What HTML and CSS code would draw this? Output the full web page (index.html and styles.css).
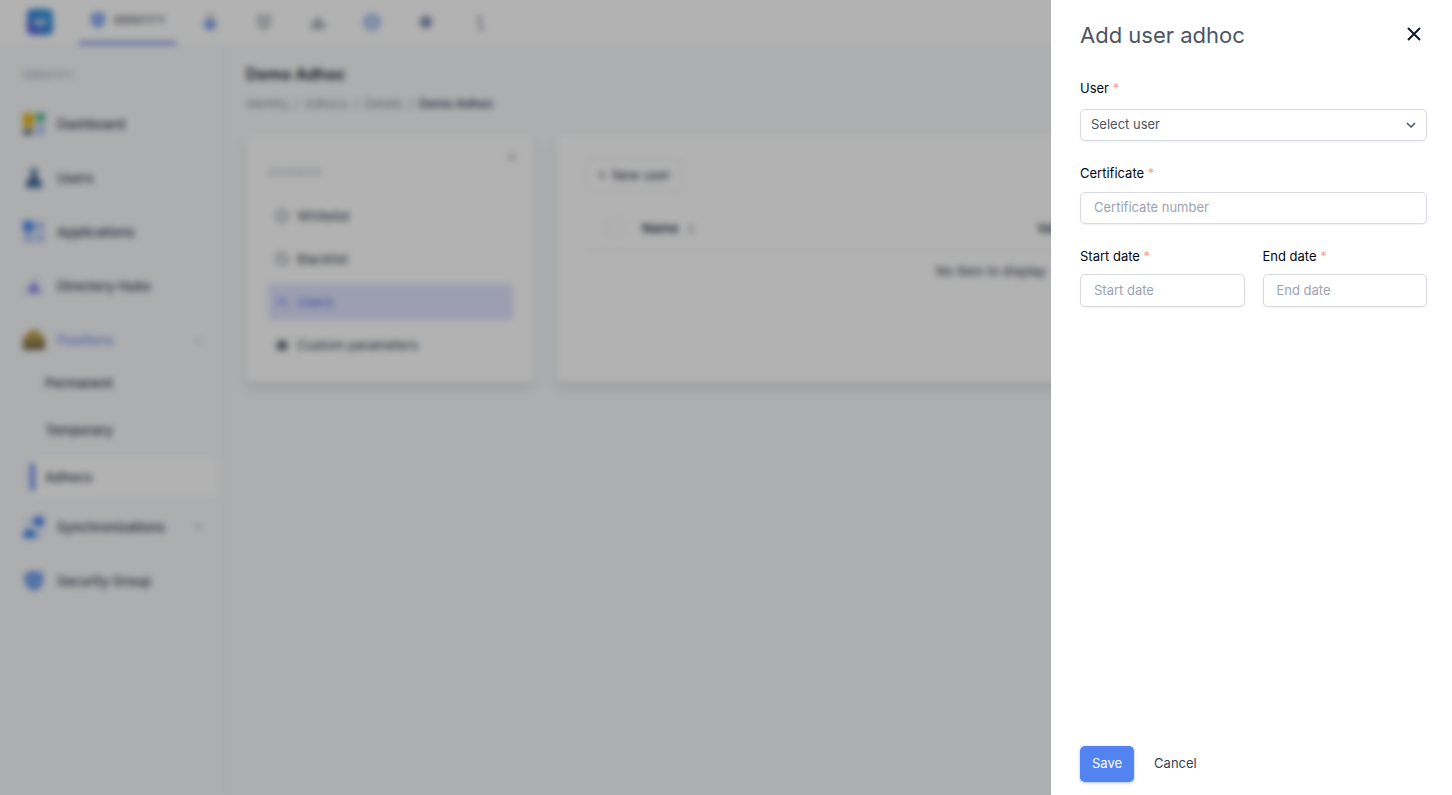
FILE: index.html
```html
<!DOCTYPE html>
<html lang="en">
<head>
  <meta charset="UTF-8" />
  <meta name="viewport" content="width=device-width, initial-scale=1.0">
  <title>Demo Adhoc</title>
  <link rel="stylesheet" href="styles.css">
</head>
<body>

  <!-- TOP BAR -->
  <header class="topbar">
    <a class="logo" href="#" aria-label="Home">
      <svg width="26" height="26" viewBox="0 0 26 26">
        <defs>
          <linearGradient id="logoFill" x1="0" y1="1" x2="1" y2="0">
            <stop offset="0" stop-color="#6a5bd8" />
            <stop offset="0.5" stop-color="#3585da" />
            <stop offset="1" stop-color="#3a9fe4" />
          </linearGradient>
        </defs>
        <rect width="26" height="26" rx="5" fill="url(#logoFill)" />
        <path d="M7 10l3 6 3-5 3 5 3-6" fill="none" stroke="#fff" stroke-width="2" />
      </svg>
    </a>
    <nav class="tabs">
      <a class="tab active" href="#">
        <svg width="16" height="18" viewBox="0 0 16 18"><path d="M8 1l7 2v6c0 4-3 6.500-7 8-4-1.500-7-4-7-8V3z" fill="#7fa3f0" /><circle cx="8" cy="8" r="3" fill="#a9c4ff" /></svg>
        IDENTITY
      </a>
      <a class="tab" href="#" aria-label="Access"><svg width="16" height="18" viewBox="0 0 16 18"><path d="M5 8V5a3 3 0 0 1 6 0v3" fill="none" stroke="#a6abb6" stroke-width="2" /><path d="M2 8h12v4a6 5 0 0 1-12 0z" fill="#79a0f0" /></svg></a>
      <a class="tab" href="#" aria-label="Policies"><svg width="16" height="18" viewBox="0 0 16 18"><path d="M2 3h12v6c0 4-3 6-6 7-3-1-6-3-6-7z" fill="#e3e4ea" stroke="#b0b3bd" stroke-width="2" /><path d="M5 6l6 5" stroke="#a6aab5" stroke-width="2" /></svg></a>
      <a class="tab" href="#" aria-label="Reports"><svg width="16" height="18" viewBox="0 0 16 18"><path d="M1 16v-5l4-3V5h6v3l4 3v5z" fill="#a5a8b0" /><path d="M4 11h2v2H4zM10 11h2v2h-2z" fill="#fff" /></svg></a>
      <a class="tab" href="#" aria-label="Time"><svg width="18" height="18" viewBox="0 0 18 18"><circle cx="9" cy="9" r="8" fill="#c0cfee" stroke="#9db9f3" stroke-width="2" /></svg></a>
      <a class="tab" href="#" aria-label="Settings"><svg width="16" height="18" viewBox="0 0 16 18"><path d="M8 2l2 2h3v3l2 2-2 2v3h-3l-2 2-2-2H3v-3L1 9l2-2V4h3z" fill="#838dac" /><circle cx="8" cy="9" r="2" fill="#92a5dd" /></svg></a>
      <a class="tab" href="#" aria-label="Help"><svg width="16" height="18" viewBox="0 0 16 18"><circle cx="8" cy="4" r="2" fill="#a0a4b0" /><path d="M5 8h4v7M5 16h7" stroke="#a0a4b0" stroke-width="2" fill="none" /></svg></a>
    </nav>
  </header>

  <div class="layout">

    <!-- SIDEBAR -->
    <aside class="sidebar">
      <p class="side-title">IDENTITY</p>
      <ul class="side-menu">
        <li><a class="side-link" href="#">
          <svg width="22" height="22" viewBox="0 0 22 22"><path d="M0 0h11v14H0z" fill="#e4b922" /><path d="M13 0h9v9h-9z" fill="#55b698" /><path d="M0 16h10v6H0z" fill="#747a85" /><path d="M13 12h9v10h-9z" fill="#b9ccf5" /></svg>
          Dashboard</a></li>
        <li><a class="side-link" href="#">
          <svg width="22" height="22" viewBox="0 0 22 22"><circle cx="11" cy="5" r="4" fill="#6c86a8" /><path d="M8 9h6l5 7v5H3v-5z" fill="#4a709b" /></svg>
          Users</a></li>
        <li><a class="side-link" href="#">
          <svg width="22" height="22" viewBox="0 0 22 22"><rect width="11" height="11" rx="2" fill="#5288ee" /><path d="M13 1h8v9h-8zM1 13h9v8H1zM13 13h8v8h-8z" fill="#adc6f2" /></svg>
          Applications</a></li>
        <li><a class="side-link" href="#">
          <svg width="22" height="22" viewBox="0 0 22 22"><path d="M11 2l10 17H1z" fill="#d5cffa" /><path d="M11 8l5 9H6z" fill="#7c64e4" /></svg>
          Directory Hubs</a></li>
        <li class="open">
          <a class="side-link current" href="#">
            <svg width="22" height="22" viewBox="0 0 22 22"><path d="M0 11l3-6 8-5 8 5 3 6z" fill="#bda04f" /><path d="M0 10h22v11H0z" fill="#80704c" /><path d="M2 12h18" stroke="#c5a653" stroke-width="2" /></svg>
            Positions
            <svg class="caret" width="8" height="8" viewBox="0 0 8 8"><path d="M1 6l3-3 3 3" fill="none" stroke="currentColor" /></svg>
          </a>
          <ul class="sub-menu">
            <li><a href="#">Permanent</a></li>
            <li><a href="#">Temporary</a></li>
            <li><a class="selected" href="#">Adhocs</a></li>
          </ul>
        </li>
        <li><a class="side-link" href="#">
          <svg width="24" height="24" viewBox="0 0 24 24"><circle cx="17" cy="6" r="6" fill="#4584ef" /><path d="M18 1l6 4-5 7z" fill="#4584ef" /><path d="M0 24c0-7 3-10 7-10s8 3 8 10z" fill="#4584ef" /><path d="M4 11c0-5 2-8 6-8M21 14c0 5-2 7-5 8" fill="none" stroke="#a9c5f7" stroke-width="2" /></svg>
          Synchronizations
          <svg class="caret" width="8" height="8" viewBox="0 0 8 8"><path d="M1 2l3 3 3-3" fill="none" stroke="currentColor" /></svg>
        </a></li>
        <li><a class="side-link" href="#">
          <svg width="22" height="22" viewBox="0 0 22 22"><path d="M11 1l9 2v7c0 6-4 9-9 11-5-2-9-5-9-11V3z" fill="#6a9bec" /><path d="M8 8h6v5H8z" fill="#a1c4fa" /></svg>
          Security Group</a></li>
      </ul>
    </aside>

    <!-- PAGE CONTENT -->
    <main class="content">
      <h1>Demo Adhoc</h1>
      <nav class="breadcrumb">
        <a href="#">Identity</a><span>/</span><a href="#">Adhocs</a><span>/</span><a href="#">Details</a><span>/</span><strong>Demo Adhoc</strong>
      </nav>

      <div class="panels">
        <section class="card settings">
          <button class="pin" type="button" aria-label="Collapse"><svg width="10" height="10" viewBox="0 0 10 10"><path d="M5 1L1 5l4 4M9 1L5 5l4 4" fill="none" stroke="#6b7280" stroke-width="1" /></svg></button>
          <p class="card-title">ADVANCED</p>
          <ul class="card-menu">
            <li><a href="#"><svg width="14" height="14" viewBox="0 0 14 14"><circle cx="7" cy="7" r="6" fill="none" stroke="currentColor" /><path d="M4 7l2 2 4-4" fill="none" stroke="currentColor" /></svg>Whitelist</a></li>
            <li><a href="#"><svg width="14" height="14" viewBox="0 0 14 14"><circle cx="7" cy="7" r="6" fill="none" stroke="currentColor" /><path d="M3 3l8 8" stroke="currentColor" /></svg>Blacklist</a></li>
            <li><a class="selected" href="#"><svg width="14" height="14" viewBox="0 0 14 14"><circle cx="5" cy="5" r="2" fill="none" stroke="currentColor" /><path d="M1 12c0-5 8-5 8 0M9 3c3 0 3 4 1 4 2 0 3 2 3 5" fill="none" stroke="currentColor" /></svg>Users</a></li>
            <li><a href="#"><svg width="14" height="14" viewBox="0 0 14 14"><rect x="2" y="3" width="10" height="9" rx="2" fill="currentColor" /><path d="M3 6h8M3 9h8" stroke="#fff" /></svg>Custom parameters</a></li>
          </ul>
        </section>

        <section class="card users">
          <button class="btn-new" type="button"><svg width="10" height="10" viewBox="0 0 10 10"><path d="M5 1v8M1 5h8" stroke="currentColor" /></svg>New user</button>
          <table>
            <thead>
              <tr>
                <th class="col-check"><input type="checkbox" aria-label="Select all"></th>
                <th>Name <svg class="sort" width="6" height="12" viewBox="0 0 6 12"><path d="M3 1l3 4H0zM3 11l3-4H0z" fill="#a3a7b0" /></svg></th>
                <th>Validity</th>
              </tr>
            </thead>
            <tbody>
              <tr><td colspan="3">No item to display</td></tr>
            </tbody>
          </table>
        </section>
      </div>
    </main>
  </div>

  <!-- DRAWER -->
  <div class="overlay"></div>
  <form class="drawer">
    <div class="drawer-head">
      <h2>Add user adhoc</h2>
      <button class="close" type="button" aria-label="Close"><svg width="14" height="14" viewBox="0 0 14 14"><path d="M1 1l12 12M13 1L1 13" stroke="#111827" stroke-width="2" /></svg></button>
    </div>

    <div class="field field-user">
      <label for="user">User <span class="req">*</span></label>
      <div class="select-wrap">
        <select id="user"><option>Select user</option></select>
        <svg width="10" height="6" viewBox="0 0 10 6"><path d="M1 1l4 4 4-4" fill="none" stroke="#4b5563" stroke-width="1.500" /></svg>
      </div>
    </div>
    <div class="field">
      <label for="certificate">Certificate <span class="req">*</span></label>
      <input type="text" id="certificate" placeholder="Certificate number">
    </div>
    <div class="field-row">
      <div class="field">
        <label for="start">Start date <span class="req">*</span></label>
        <input type="text" id="start" placeholder="Start date">
      </div>
      <div class="field">
        <label for="end">End date <span class="req">*</span></label>
        <input type="text" id="end" placeholder="End date">
      </div>
    </div>

    <div class="drawer-foot">
      <button class="btn-save" type="submit">Save</button>
      <button class="btn-cancel" type="button">Cancel</button>
    </div>
  </form>

</body>
</html>
```

FILE: styles.css
```css
* {
  box-sizing: border-box;
}
body {
  margin: 0;
  font-family: Inter, "Liberation Sans", sans-serif;
  font-size: 13px;
  line-height: 20px;
  background: #f7f9fb;
  color: #374151;
  overflow: hidden;
}
a {
  color: inherit;
  text-decoration: none;
}
ul {
  list-style: none;
  margin: 0;
  padding: 0;
}
input, select, button {
  font: inherit;
}
button {
  cursor: pointer;
}

/* top bar */
.topbar {
  display: flex;
  height: 44px;
  padding-left: 27px;
  background: #fff;
}
.logo {
  display: flex;
  align-items: center;
  width: 52px;
}
.tabs {
  display: flex;
}
.tab {
  display: flex;
  align-items: center;
  justify-content: center;
  width: 54px;
}
.tab.active {
  gap: 8px;
  width: 97px;
  height: 45px;
  margin-right: 7px;
  padding-bottom: 2px;
  border-bottom: 4px solid #8da3ea;
  color: #4b5060;
  font-size: 11px;
  font-weight: 500;
}

/* sidebar */
.layout {
  display: flex;
  min-height: calc(100vh - 44px);
}
.sidebar {
  flex: none;
  width: 228px;
  padding: 21px 8px 0 23px;
  border-right: 2px solid #f1f3f6;
}
.side-title {
  margin: 0 0 17px;
  color: #9ca3af;
  font-size: 11px;
}
.side-menu > li {
  margin-bottom: 10px;
}
.side-menu > .open {
  margin-bottom: 7px;
}
.side-link {
  display: flex;
  align-items: center;
  gap: 12px;
  height: 44px;
  padding-right: 15px;
  font-weight: 500;
}
.side-link > svg:first-child {
  flex: none;
  width: 22px;
}
.side-link.current {
  color: #7d94e8;
}
.caret {
  margin-left: auto;
}
.sub-menu {
  display: flex;
  flex-direction: column;
  gap: 5px;
  padding-left: 7px;
}
.sub-menu a {
  display: flex;
  align-items: center;
  height: 42px;
  padding-left: 15px;
  font-weight: 500;
}
.sub-menu .selected {
  padding-left: 0;
  border-radius: 6px;
  background: #fff;
}
.sub-menu .selected::before {
  content: "";
  width: 5px;
  height: 28px;
  margin-right: 10px;
  border-radius: 3px;
  background: #708ded;
}

/* content */
.content {
  flex: 1;
  padding: 20px 26px 0 18px;
}
h1 {
  margin: 0 0 10px;
  color: #1f2937;
  font-size: 16px;
  font-weight: 600;
  line-height: 20px;
}
.breadcrumb {
  display: flex;
  gap: 6px;
  color: #8b909c;
  font-size: 12px;
}
.breadcrumb strong {
  color: #4b5263;
  font-weight: 600;
}
.panels {
  display: flex;
  gap: 22px;
  margin-top: 20px;
}
.card {
  height: 248px;
  border-radius: 6px;
  background: #fff;
  box-shadow: 0 6px 12px rgba(0, 0, 0, 0.1);
}
.settings {
  flex: none;
  width: 288px;
  padding: 18px 21px 0 22px;
}
.pin {
  display: block;
  height: 10px;
  margin: 0 -4px 0 auto;
  padding: 0;
  border: none;
  background: none;
  line-height: 0;
}
.card-title {
  margin: 0 0 16px;
  color: #b3b9c2;
  font-size: 10px;
}
.card-menu {
  display: flex;
  flex-direction: column;
  gap: 7px;
}
.card-menu a {
  display: flex;
  align-items: center;
  gap: 8px;
  height: 36px;
  padding-left: 7px;
}
.card-menu .selected {
  border-radius: 3px;
  background: #e0e3ff;
  color: #5578e0;
}
.users {
  flex: 1;
  padding: 24px 29px 0;
}
.btn-new {
  display: flex;
  align-items: center;
  gap: 5px;
  height: 34px;
  padding: 0 11px;
  border: 1px solid #e5e7eb;
  border-radius: 6px;
  background: #fff;
  color: #374151;
}
table {
  width: 100%;
  margin-top: 14px;
  border-collapse: collapse;
}
th {
  height: 44px;
  padding: 0;
  border-bottom: 1px solid #e5e7eb;
  font-weight: 600;
  text-align: left;
}
th:last-child {
  width: 360px;
}
.col-check {
  width: 57px;
  padding-left: 20px;
}
.col-check input {
  display: block;
  appearance: none;
  width: 18px;
  height: 18px;
  margin: 0;
  border: 1px solid #e5e7eb;
  border-radius: 4px;
}
.sort {
  margin-left: 6px;
  vertical-align: middle;
}
td {
  height: 42px;
  padding: 0;
  text-align: center;
}

/* drawer */
.overlay {
  position: fixed;
  inset: 0;
  background: rgba(0, 0, 0, 0.3);
  backdrop-filter: blur(3px);
}
.drawer {
  position: fixed;
  top: 0;
  right: 0;
  bottom: 0;
  display: flex;
  flex-direction: column;
  gap: 22px;
  width: 401px;
  padding: 20px 25px 13px 29px;
  background: #fff;
}
.drawer-head {
  display: flex;
  align-items: center;
  justify-content: space-between;
  height: 30px;
  margin-bottom: 6px;
}
.drawer-head h2 {
  margin: 0;
  color: #4b5563;
  font-size: 22px;
  font-weight: 400;
}
.close {
  display: flex;
  padding: 5px 6px 7px;
  border: none;
  background: none;
}
.field {
  flex: 1;
  min-width: 0;
}
.drawer > .field {
  flex: none;
}
.field label {
  display: block;
  margin-bottom: 9px;
  color: #030712;
}
.field-user label {
  margin-bottom: 11px;
}
.field-row label {
  margin-bottom: 8px;
}
.req {
  color: #f8a195;
}
.field input, .field select {
  display: block;
  width: 100%;
  height: 32px;
  padding: 0 13px 2px;
  border: 1px solid #d7d9e0;
  border-radius: 5px;
  background: #fff;
  color: #4b5563;
  box-shadow: 0 1px 2px rgba(0, 0, 0, 0.06);
}
.field select {
  appearance: none;
  padding: 0 10px 2px;
}
.field-row input {
  height: 33px;
}
.field input::placeholder {
  color: #9ca3af;
}
.select-wrap {
  position: relative;
}
.select-wrap svg {
  position: absolute;
  top: 13px;
  right: 11px;
  pointer-events: none;
}
.field-row {
  display: flex;
  gap: 18px;
}
.drawer-foot {
  display: flex;
  gap: 8px;
  margin-top: auto;
}
.drawer-foot button {
  height: 36px;
  padding: 0 12px 2px;
  border: none;
  border-radius: 5px;
  background: none;
  color: #374151;
}
.drawer-foot .btn-save {
  background: #5383f0;
  color: #fff;
  box-shadow: 0 1px 3px rgba(83, 131, 240, 0.5);
}
```
